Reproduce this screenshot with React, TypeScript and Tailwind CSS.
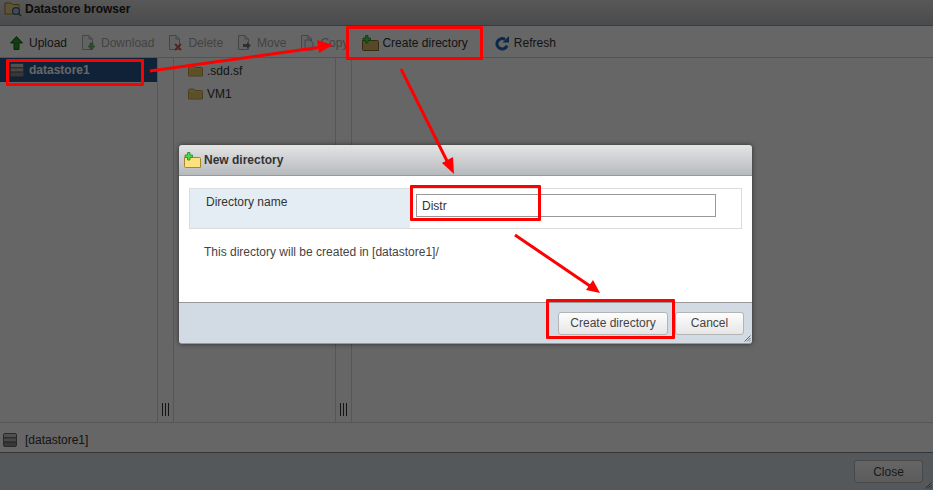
import React from 'react';

const DbIcon = ({ className }: { className?: string }) => (
  <svg className={className} viewBox="0 0 14 14" width="14" height="14">
    <rect x="0.5" y="0.5" width="13" height="13" rx="1.5" fill="#9a9a9a" stroke="#666" />
    <rect x="1" y="1" width="12" height="3.4" fill="#c9c9c9" />
    <rect x="1" y="5.2" width="12" height="3.4" fill="#b4b4b4" />
    <rect x="1" y="9.4" width="12" height="3.4" fill="#8c8c8c" />
    <path d="M1 4.8h12M1 9h12" stroke="#444" strokeWidth="0.8" />
  </svg>
);

const FolderIcon = () => (
  <svg viewBox="0 0 15 12" width="15" height="12">
    <path d="M0.5 2.5 L1.5 1 H5.5 L7 2.5 H13.5 Q14.5 2.5 14.5 3.5 V11 H0.5 Z" fill="#f0d878" stroke="#b49a50" />
    <rect x="1.5" y="4" width="12" height="6" fill="#e8c860" />
  </svg>
);

const NewFolderIcon = ({ fill = '#fbe27c', stroke = '#a8852f' }: { fill?: string; stroke?: string }) => (
  <svg viewBox="0 0 17 16" width="17" height="16">
    <path d="M0.5 5.5 H15.5 Q16.5 5.5 16.5 6.5 V15.5 H1.5 Q0.5 15.5 0.5 14.5 Z" fill={fill} stroke={stroke} />
    <path d="M3.5 0.5h2.5v2.5h2.5v2.5H6v2.5H3.5V5.5H1V3h2.5z" fill="#4bd84b" stroke="#1f8f1f" strokeWidth="0.8" />
  </svg>
);

const UploadIcon = () => (
  <svg viewBox="0 0 13 14" width="13" height="14">
    <path d="M6.5 0.5 L12.5 7 H9 V13.5 H4 V7 H0.5 Z" fill="#2f9a2f" stroke="#14601a" />
  </svg>
);

const DocIcon = ({ children }: { children?: React.ReactNode }) => (
  <svg viewBox="0 0 16 16" width="16" height="16">
    <path d="M2.5 0.5 H9 L12.5 4 V14.5 H2.5 Z" fill="#f7f8fa" stroke="#a5adb6" />
    <path d="M9 0.5 V4 H12.5" fill="none" stroke="#a5adb6" />
    {children}
  </svg>
);

const RefreshIcon = () => (
  <svg viewBox="0 0 16 16" width="16" height="16">
    <path d="M13 10.6 A5.2 5.2 0 1 1 11 4.4" fill="none" stroke="#1f66b5" strokeWidth="3" />
    <path d="M8.5 7.5 H15 V1 Z" fill="#1f66b5" />
  </svg>
);

const ToolButton = ({ icon, label, disabled, className }: { icon: React.ReactNode; label: string; disabled?: boolean; className?: string }) => (
  <div className={`flex items-center shrink-0 ${disabled ? 'text-[#a8a8a8]' : 'text-[#333]'} ${className ?? ''}`}>
    {icon}
    <span>{label}</span>
  </div>
);

const Grip = () => (
  <div className="mt-auto mb-[6px] flex justify-center gap-[2px]">
    <div className="w-px h-[13px] bg-[#333]" />
    <div className="w-px h-[13px] bg-[#333]" />
    <div className="w-px h-[13px] bg-[#333]" />
  </div>
);

const Splitter = () => (
  <div className="w-[17px] shrink-0 border-x border-[#d8d8d8] flex flex-col">
    <Grip />
  </div>
);

const ResizeHandle = () => (
  <svg className="absolute right-[1px] bottom-[1px]" viewBox="0 0 7 7" width="7" height="7">
    <path d="M6.5 0.5 L0.5 6.5 M6.5 3 L3 6.5 M6.5 5.5 L5.5 6.5" stroke="#666" strokeWidth="1" />
  </svg>
);

const RedBox = ({ className }: { className: string }) => (
  <div className={`absolute border-[3px] border-[#ff0000] rounded-[1px] ${className}`} />
);

const DialogButton = ({ label, className }: { label: string; className: string }) => (
  <div className={`flex items-center justify-center h-[23px] border border-[#b4b4b4] rounded-[3px] bg-gradient-to-b from-[#fdfdfd] to-[#e6e6e6] text-[#444] ${className}`}>
    {label}
  </div>
);

const App: React.FC = () => {
  return (
    <div className="relative w-[933px] h-[490px] overflow-hidden bg-white text-[12px] text-[#333] font-['Liberation_Sans',Arial,sans-serif]">
      {/* Datastore browser window */}
      <div className="flex flex-col h-full">
        <div className="h-[26px] shrink-0 flex items-center gap-[3px] pl-[4px] pb-[7px] border-b border-[#9a9a9a] bg-gradient-to-b from-[#dcdcdc] to-[#b9bbbd] font-bold text-[#222]">
          <svg viewBox="0 0 18 16" width="18" height="16">
            <path d="M1 2 H7 L8.5 3.5 H15 V13 H1 Z" fill="#e8d088" stroke="#9a7a30" />
            <circle cx="12" cy="10" r="3.4" fill="#9fc4e8" stroke="#4a5a6a" strokeWidth="1.3" />
            <path d="M14.5 12.5 L17 15" stroke="#4a5a6a" strokeWidth="1.6" />
          </svg>
          <span>Datastore browser</span>
        </div>

        <div className="h-[32px] shrink-0 flex items-center pl-[10px] pt-[2px] border-b border-[#d0d0d0]">
          <ToolButton className="gap-[6px]" icon={<UploadIcon />} label="Upload" />
          <ToolButton
            className="ml-[13px] gap-[5px]"
            disabled
            label="Download"
            icon={<DocIcon><path d="M10 8 h3 v3 h2 l-3.5 4 -3.5 -4 h2z" fill="#6fbf6f" stroke="#4a9a4a" strokeWidth="0.6" /></DocIcon>}
          />
          <ToolButton
            className="ml-[13px] gap-[5px]"
            disabled
            label="Delete"
            icon={<DocIcon><path d="M8 9 L14 15 M14 9 L8 15" stroke="#d95a5a" strokeWidth="2" /></DocIcon>}
          />
          <ToolButton
            className="ml-[13px] gap-[5px]"
            disabled
            label="Move"
            icon={<DocIcon><path d="M7 9 h4 v-2 l4 3.5 -4 3.5 v-2 h-4z" fill="#777" /></DocIcon>}
          />
          <ToolButton
            className="ml-[13px] gap-[5px]"
            disabled
            label="Copy"
            icon={<DocIcon><path d="M6 5 H11 L14 8 V15 H6 Z" fill="#f7f8fa" stroke="#a5adb6" /></DocIcon>}
          />
          <ToolButton className="ml-[14px] gap-[3px]" icon={<NewFolderIcon fill="#d9b56a" stroke="#8a6a2a" />} label="Create directory" />
          <ToolButton className="ml-[26px] gap-[4px]" icon={<RefreshIcon />} label="Refresh" />
        </div>

        <div className="flex-1 flex min-h-0">
          <div className="w-[157px] shrink-0">
            <div className="h-[24px] flex items-center gap-[5px] pl-[10px] bg-[#26558c] text-white font-bold">
              <DbIcon />
              <span>datastore1</span>
            </div>
          </div>
          <Splitter />
          <div className="w-[161px] shrink-0 pt-[1px] pl-[14px] text-[#333]">
            <div className="h-[23px] flex items-center gap-[4px]"><FolderIcon /><span>.sdd.sf</span></div>
            <div className="h-[23px] flex items-center gap-[4px]"><FolderIcon /><span>VM1</span></div>
          </div>
          <Splitter />
          <div className="flex-1" />
        </div>

        <div className="h-[30px] shrink-0 flex items-center gap-[8px] pl-[3px] pt-[4px] border-t border-[#d8d8d8]">
          <DbIcon />
          <span>[datastore1]</span>
        </div>

        <div className="relative h-[38px] shrink-0 flex items-center justify-end pr-[10px] border-t border-[#888] bg-[#d2dbe3]">
          <DialogButton label="Close" className="w-[69px]" />
          <ResizeHandle />
        </div>
      </div>

      {/* dim layer under the dialog */}
      <div className="absolute inset-0 bg-black/60" />

      {/* New directory dialog */}
      <div className="absolute left-[179px] top-[145px] w-[573px] h-[199px] flex flex-col rounded-[3px] overflow-hidden border-b border-[#999] shadow-[0_0_5px_rgba(0,0,0,0.55)]">
        <div className="h-[31px] shrink-0 flex items-center gap-[3px] pl-[5px] border-b border-[#999] bg-gradient-to-b from-[#e4e4e4] to-[#b7babd] font-bold text-[#333]">
          <NewFolderIcon />
          <span>New directory</span>
        </div>
        <div className="flex-1 bg-white px-[10px] pt-[12px]">
          <div className="flex h-[41px] border border-[#dcdcdc]">
            <div className="w-[220px] shrink-0 bg-[#e3edf3] pl-[16px] pt-[4px] text-[#333]">Directory name</div>
            <div className="pl-[6px] pt-[5px]">
              <div className="w-[300px] h-[23px] border border-[#999] flex items-center pl-[5px] text-[#333]">Distr</div>
            </div>
          </div>
          <div className="mt-[14px] pl-[15px] text-[#444]">This directory will be created in [datastore1]/</div>
        </div>
        <div className="relative h-[41px] shrink-0 flex items-center justify-end gap-[7px] pr-[8px] border-t border-[#999] bg-[#d2dbe3]">
          <DialogButton label="Create directory" className="w-[110px]" />
          <DialogButton label="Cancel" className="w-[69px]" />
          <ResizeHandle />
        </div>
      </div>

      {/* red annotations */}
      <RedBox className="left-[6px] top-[59px] w-[138px] h-[27px]" />
      <RedBox className="left-[346px] top-[26px] w-[137px] h-[34px]" />
      <RedBox className="left-[410px] top-[185px] w-[131px] h-[36px]" />
      <RedBox className="left-[546px] top-[299px] w-[129px] h-[40px]" />
      <svg className="absolute left-0 top-0" width="933" height="490" viewBox="0 0 933 490">
        <g stroke="#ff0000" strokeWidth="3" fill="none">
          <path d="M150 71 L322 47" />
          <path d="M401 69 L449 165" />
          <path d="M515 235 L590 286" />
        </g>
        <g fill="#ff0000">
          <path d="M333 45 L317 40 L319 53 Z" />
          <path d="M454 174 L442 163 L453 157 Z" />
          <path d="M600 293 L586 290 L593 280 Z" />
        </g>
      </svg>
    </div>
  );
};

export default App;
